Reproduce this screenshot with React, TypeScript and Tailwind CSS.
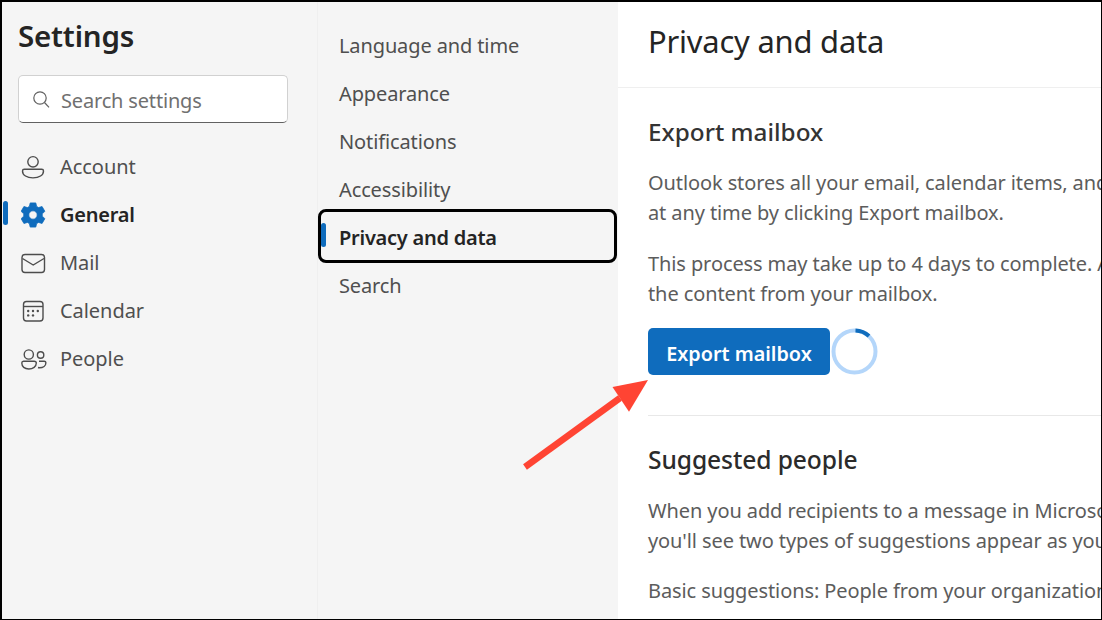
import React from "react";

function NavIcon({ children }: { children: React.ReactNode }) {
  return (
    <svg width="28" height="28" viewBox="0 0 28 28" fill="none" stroke="#4d4d4d" strokeWidth="1.4" className="shrink-0">
      {children}
    </svg>
  );
}

const Account = () => (
  <NavIcon>
    <circle cx="12" cy="8.800" r="5.200" />
    <path d="M3.300 16.200h17.400c1.100 0 1.800.7 1.800 1.700 0 4.300-4.400 7-10.500 7S1.500 22.200 1.500 17.900c0-1 .7-1.700 1.800-1.700z" />
  </NavIcon>
);

function gearPath() {
  const cx = 12;
  const cy = 14;
  const pts: string[] = [];
  for (let i = 0; i < 6; i++) {
    const a = -90 + i * 60;
    const ring: [number, number][] = [
      [9.300, a - 23],
      [12.400, a - 13],
      [12.400, a + 13],
      [9.300, a + 23],
    ];
    for (const [r, d] of ring) {
      const t = (d * Math.PI) / 180;
      pts.push(`${(cx + r * Math.cos(t)).toFixed(2)} ${(cy + r * Math.sin(t)).toFixed(2)}`);
    }
  }
  return `M${pts.join("L")}Z M${cx + 4.200} ${cy}a4.200 4.200 0 1 0 -8.400 0a4.200 4.200 0 1 0 8.400 0z`;
}

const Gear = () => (
  <svg width="28" height="28" viewBox="0 0 28 28" className="shrink-0">
    <path fillRule="evenodd" fill="#0f6cbd" stroke="#0f6cbd" strokeWidth="0.8" strokeLinejoin="round" d={gearPath()} />
  </svg>
);

const Mail = () => (
  <NavIcon>
    <rect x="1" y="5.500" width="22.500" height="18" rx="3" />
    <path d="M1.500 9.500l10.700 6.500 10.800-6.500" />
  </NavIcon>
);

const Calendar = () => (
  <NavIcon>
    <rect x="2.500" y="4.500" width="19.500" height="19.500" rx="3" />
    <path d="M2.500 9.500h19.500" />
    <g fill="#4d4d4d" stroke="none">
      <circle cx="7.200" cy="14" r="1.200" />
      <circle cx="12" cy="14" r="1.200" />
      <circle cx="16.800" cy="14" r="1.200" />
      <circle cx="7.200" cy="18.400" r="1.200" />
      <circle cx="12" cy="18.400" r="1.200" />
    </g>
  </NavIcon>
);

const People = () => (
  <NavIcon>
    <circle cx="7.800" cy="9.500" r="4.600" />
    <path d="M2.500 16.200h10.600c1.300 0 2.200.7 2.200 1.800 0 3.600-3.300 6-7.500 6S.8 21.600.8 18c0-1.100.8-1.800 1.700-1.800z" />
    <circle cx="19.600" cy="10" r="3.200" />
    <path d="M18 16.200h5.200c1 0 1.700.6 1.700 1.500 0 3-2.800 5-6.400 5-.5 0-1 0-1.500-.2" />
  </NavIcon>
);

const mainNav = [
  { label: "Account", icon: <Account /> },
  { label: "General", icon: <Gear />, active: true },
  { label: "Mail", icon: <Mail /> },
  { label: "Calendar", icon: <Calendar /> },
  { label: "People", icon: <People /> },
];

const subNav = ["Language and time", "Appearance", "Notifications", "Accessibility", "Privacy and data", "Search"];

export default function App() {
  return (
    <div className="relative h-[620px] w-[1102px] overflow-hidden border-t-2 border-r border-b border-l-2 border-black bg-white font-['Noto_Sans','Open_Sans',sans-serif] text-[#242424]">
      <div className="flex h-full">
        {/* Left rail */}
        <aside className="flex h-full w-[316px] shrink-0 flex-col border-r border-[#efefef] bg-[#f5f5f5] pl-4">
          <h1 className="mt-[13px] h-[42px] text-[29.5px] leading-[42px] font-semibold tracking-[-0.2px]">Settings</h1>
          <div className="mt-[18px] flex h-[48px] w-[270px] items-center rounded-[5px] border border-[#d1d1d1] border-b-[#616161] bg-white pl-[12px]">
            <svg width="20" height="20" viewBox="0 0 20 20" fill="none" stroke="#616161" strokeWidth="1.200">
              <circle cx="9" cy="9" r="6.200" />
              <path d="M13.500 13.500l4.500 4.800" />
            </svg>
            <span className="mt-[3px] ml-[10px] text-[20px] leading-none tracking-[-0.17px] text-[#707070]">Search settings</span>
          </div>
          <nav className="mt-5 flex flex-col">
            {mainNav.map((n) => (
              <div key={n.label} className="relative flex h-12 items-center">
                {n.active && <span className="absolute top-[10px] -left-[15px] h-[24px] w-[5px] rounded-full bg-[#0f6cbd]" />}
                <span className="ml-[3px] flex w-[28px] justify-center">{n.icon}</span>
                <span className={`ml-[11px] text-[20px] ${n.active ? "font-semibold tracking-[-0.25px] text-[#242424]" : "tracking-[-0.05px] text-[#4f4f4f]"}`}>
                  {n.label}
                </span>
              </div>
            ))}
          </nav>
        </aside>

        {/* Middle column */}
        <section className="flex h-full w-[300px] shrink-0 flex-col bg-[#f5f5f5] pt-5 pr-px">
          {subNav.map((s) => {
            const active = s === "Privacy and data";
            return (
              <div
                key={s}
                className={
                  active
                    ? "relative -mt-[5px] -mb-px flex h-[54px] items-center rounded-[8px] border-[3px] border-black pt-[3px] pl-[18px] text-[20px] font-semibold tracking-[-0.25px] text-[#242424]"
                    : "flex h-12 items-center pl-[21px] text-[20px] tracking-[-0.12px] text-[#4f4f4f]"
                }
              >
                {active && <span className="absolute top-[11px] left-0 h-[24px] w-[5px] rounded-full bg-[#0f6cbd]" />}
                {s}
              </div>
            );
          })}
        </section>

        {/* Content */}
        <main className="min-w-0 flex-1 overflow-hidden whitespace-nowrap">
          <div className="flex h-[86px] items-center border-b border-[#efefef] pb-[6px] pl-[30px]">
            <h2 className="text-[30.9px] font-normal tracking-[-0.2px]">Privacy and data</h2>
          </div>
          <div className="pl-[30px]">
            <h3 className="mt-[27px] text-[24.3px] leading-[34px] font-medium text-[#333]">Export mailbox</h3>
            <p className="mt-[19px] text-[20px] leading-[30px] tracking-[-0.1px] text-[#5c5c5c]">
              Outlook stores all your email, calendar items, and contacts. You can export a copy
              <br />
              at any time by clicking Export mailbox.
            </p>
            <p className="mt-[21px] text-[20px] leading-[30px] tracking-[-0.1px] text-[#5c5c5c]">
              This process may take up to 4 days to complete. After it is complete you can download
              <br />
              the content from your mailbox.
            </p>
            <div className="mt-[19px] flex items-center">
              <button className="h-[47px] w-[182px] rounded-[5px] bg-[#0f6cbd] pt-1 text-[19.8px] font-semibold text-white">Export mailbox</button>
              <svg width="47" height="47" viewBox="0 0 47 47" className="ml-px" fill="none" strokeWidth="4">
                <circle cx="23.500" cy="23.500" r="21" stroke="#b4d6fa" />
                <path d="M24.500 2.500a21 21 0 0 1 13.500 5.500" stroke="#0f6cbd" />
              </svg>
            </div>
            <div className="mt-[40px] border-t border-[#e8e8e8]" />
            <h3 className="mt-[26px] text-[24.6px] leading-[36px] font-medium tracking-[-0.1px] text-[#2b2b2b]">Suggested people</h3>
            <p className="mt-[18px] text-[20px] leading-[30px] tracking-[-0.1px] text-[#5c5c5c]">
              When you add recipients to a message in Microsoft Outlook
              <br />
              you'll see two types of suggestions appear as you type.
            </p>
            <p className="mt-[20px] text-[20px] leading-[30px] tracking-[-0.1px] text-[#5c5c5c]">Basic suggestions: People from your organization and contacts</p>
          </div>
        </main>
      </div>

      {/* Annotation arrow */}
      <svg className="pointer-events-none absolute -top-[2px] -left-[2px]" width="1102" height="620">
        <path d="M525 467L620 398" stroke="#ff4433" strokeWidth="6.500" />
        <polygon points="648,380 612.500,387 629,411.700" fill="#ff4433" />
      </svg>
    </div>
  );
}
